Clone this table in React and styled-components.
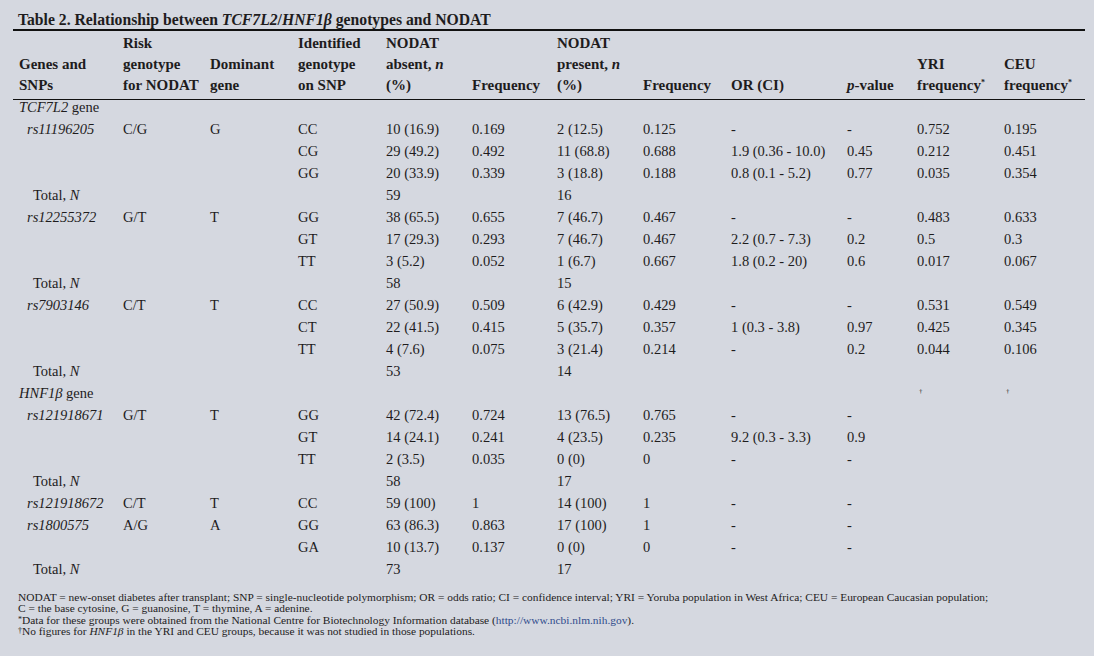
import React from 'react';
import styled, {createGlobalStyle} from 'styled-components';

const GlobalStyle = createGlobalStyle`
  html, body {
    margin: 0;
    padding: 0;
    background: #d5d8e0;
  }
  body {
    font-family: "Liberation Serif", "Times New Roman", serif;
    color: #1e1c1d;
  }
`;

const Page = styled.div`
  width: 1094px;
  height: 656px;
  padding-top: 10px;
  box-sizing: border-box;
`;

const Title = styled.div`
  margin: 0 9px 0 13px;
  padding-left: 5px;
  font-size: 15.7px;
  font-weight: bold;
  line-height: 19px;
  border-bottom: 2px solid #111;
`;

const Table = styled.table`
  margin-left: 13px;
  width: 1072px;
  table-layout: fixed;
  border-collapse: collapse;
  font-size: 14.5px;
`;

const HeadCell = styled.th`
  padding: 2px 0 3px 6px;
  text-align: left;
  vertical-align: bottom;
  font-size: 15px;
  font-weight: bold;
  line-height: 21px;
  white-space: nowrap;
  border-bottom: 1px solid #111;
`;

const Row = styled.tr`
  line-height: ${p => (p.$compact ? '15px' : '22px')};
`;

const Cell = styled.td`
  padding: 0 0 ${p => (p.$compact ? '3px' : '0')} ${p => p.$indent + 6}px;
  white-space: nowrap;
  vertical-align: top;
`;

const Sup = styled.sup`
  font-size: 8px;
  vertical-align: 5px;
  line-height: 0;
`;

const NoteMark = styled.span`
  font-size: 8px;
  vertical-align: 2px;
  line-height: 0;
`;

const Dagger = styled.span`
  font-size: 7px;
  vertical-align: 5px;
  line-height: 0;
  padding-left: 2px;
`;

const Notes = styled.div`
  margin: 12px 0 0 18px;
  font-size: 11.4px;
  line-height: 11.4px;
`;

const Link = styled.span`
  color: #2f4b8c;
`;

const widths = [104, 87, 88, 88, 86, 85, 86, 88, 116, 70, 87, 87];

const I = styled.i``;

const tot = (a, b) => [<>Total, <I>N</I></>, '', '', '', a, '', b, '', '', '', '', ''];

const rows = [
  {kind: 'gene', cells: [<><I>TCF7L2</I> gene</>]},
  {kind: 'snp', cells: [<I>rs11196205</I>, 'C/G', 'G', 'CC', '10 (16.9)', '0.169', '2 (12.5)', '0.125', '-', '-', '0.752', '0.195']},
  {cells: ['', '', '', 'CG', '29 (49.2)', '0.492', '11 (68.8)', '0.688', '1.9 (0.36 - 10.0)', '0.45', '0.212', '0.451']},
  {cells: ['', '', '', 'GG', '20 (33.9)', '0.339', '3 (18.8)', '0.188', '0.8 (0.1 - 5.2)', '0.77', '0.035', '0.354']},
  {kind: 'total', cells: tot('59', '16')},
  {kind: 'snp', cells: [<I>rs12255372</I>, 'G/T', 'T', 'GG', '38 (65.5)', '0.655', '7 (46.7)', '0.467', '-', '-', '0.483', '0.633']},
  {cells: ['', '', '', 'GT', '17 (29.3)', '0.293', '7 (46.7)', '0.467', '2.2 (0.7 - 7.3)', '0.2', '0.5', '0.3']},
  {cells: ['', '', '', 'TT', '3 (5.2)', '0.052', '1 (6.7)', '0.667', '1.8 (0.2 - 20)', '0.6', '0.017', '0.067']},
  {kind: 'total', cells: tot('58', '15')},
  {kind: 'snp', cells: [<I>rs7903146</I>, 'C/T', 'T', 'CC', '27 (50.9)', '0.509', '6 (42.9)', '0.429', '-', '-', '0.531', '0.549']},
  {cells: ['', '', '', 'CT', '22 (41.5)', '0.415', '5 (35.7)', '0.357', '1 (0.3 - 3.8)', '0.97', '0.425', '0.345']},
  {cells: ['', '', '', 'TT', '4 (7.6)', '0.075', '3 (21.4)', '0.214', '-', '0.2', '0.044', '0.106']},
  {kind: 'total', cells: tot('53', '14')},
  {kind: 'gene', cells: [<><I>HNF1β</I> gene</>, '', '', '', '', '', '', '', '', '', <Dagger>†</Dagger>, <Dagger>†</Dagger>]},
  {kind: 'snp', cells: [<I>rs121918671</I>, 'G/T', 'T', 'GG', '42 (72.4)', '0.724', '13 (76.5)', '0.765', '-', '-', '', '']},
  {cells: ['', '', '', 'GT', '14 (24.1)', '0.241', '4 (23.5)', '0.235', '9.2 (0.3 - 3.3)', '0.9', '', '']},
  {cells: ['', '', '', 'TT', '2 (3.5)', '0.035', '0 (0)', '0', '-', '-', '', '']},
  {kind: 'total', cells: tot('58', '17')},
  {kind: 'snp', cells: [<I>rs121918672</I>, 'C/T', 'T', 'CC', '59 (100)', '1', '14 (100)', '1', '-', '-', '', '']},
  {kind: 'snp', cells: [<I>rs1800575</I>, 'A/G', 'A', 'GG', '63 (86.3)', '0.863', '17 (100)', '1', '-', '-', '', '']},
  {cells: ['', '', '', 'GA', '10 (13.7)', '0.137', '0 (0)', '0', '-', '-', '', '']},
  {kind: 'total', cells: tot('73', '17')},
];

const indentFor = kind => (kind === 'snp' ? 8 : kind === 'total' ? 14 : 0);

const headers = [
  <>Genes and<br />SNPs</>,
  <>Risk<br />genotype<br />for NODAT</>,
  <>Dominant<br />gene</>,
  <>Identified<br />genotype<br />on SNP</>,
  <>NODAT<br />absent, <I>n</I><br />(%)</>,
  'Frequency',
  <>NODAT<br />present, <I>n</I><br />(%)</>,
  'Frequency',
  'OR (CI)',
  <><I>p</I>-value</>,
  <>YRI<br />frequency<Sup>*</Sup></>,
  <>CEU<br />frequency<Sup>*</Sup></>,
];

export default function App() {
  return (
    <Page>
      <GlobalStyle />
      <Title>
        Table 2. Relationship between <I>TCF7L2</I>/<I>HNF1β</I> genotypes and NODAT
      </Title>
      <Table>
        <colgroup>
          {widths.map((w, i) => <col key={i} style={{width: w}} />)}
        </colgroup>
        <thead>
          <tr>
            {headers.map((h, i) => <HeadCell key={i}>{h}</HeadCell>)}
          </tr>
        </thead>
        <tbody>
          {rows.map((r, ri) => {
            const compact = ri === 0;
            const cells = r.cells.concat(Array(12 - r.cells.length).fill(''));
            return (
              <Row key={ri} $compact={compact}>
                {cells.map((c, ci) => (
                  <Cell key={ci} $compact={compact} $indent={ci === 0 ? indentFor(r.kind) : 0}>
                    {c}
                  </Cell>
                ))}
              </Row>
            );
          })}
        </tbody>
      </Table>
      <Notes>
        NODAT = new-onset diabetes after transplant; SNP = single-nucleotide polymorphism; OR = odds ratio; CI = confidence interval; YRI = Yoruba population in West Africa; CEU = European Caucasian population;
        <br />
        C = the base cytosine, G = guanosine, T = thymine, A = adenine.
        <br />
        <NoteMark>*</NoteMark>Data for these groups were obtained from the National Centre for Biotechnology Information database (<Link>http://www.ncbi.nlm.nih.gov</Link>).
        <br />
        <NoteMark>†</NoteMark>No figures for <I>HNF1β</I> in the YRI and CEU groups, because it was not studied in those populations.
      </Notes>
    </Page>
  );
}
